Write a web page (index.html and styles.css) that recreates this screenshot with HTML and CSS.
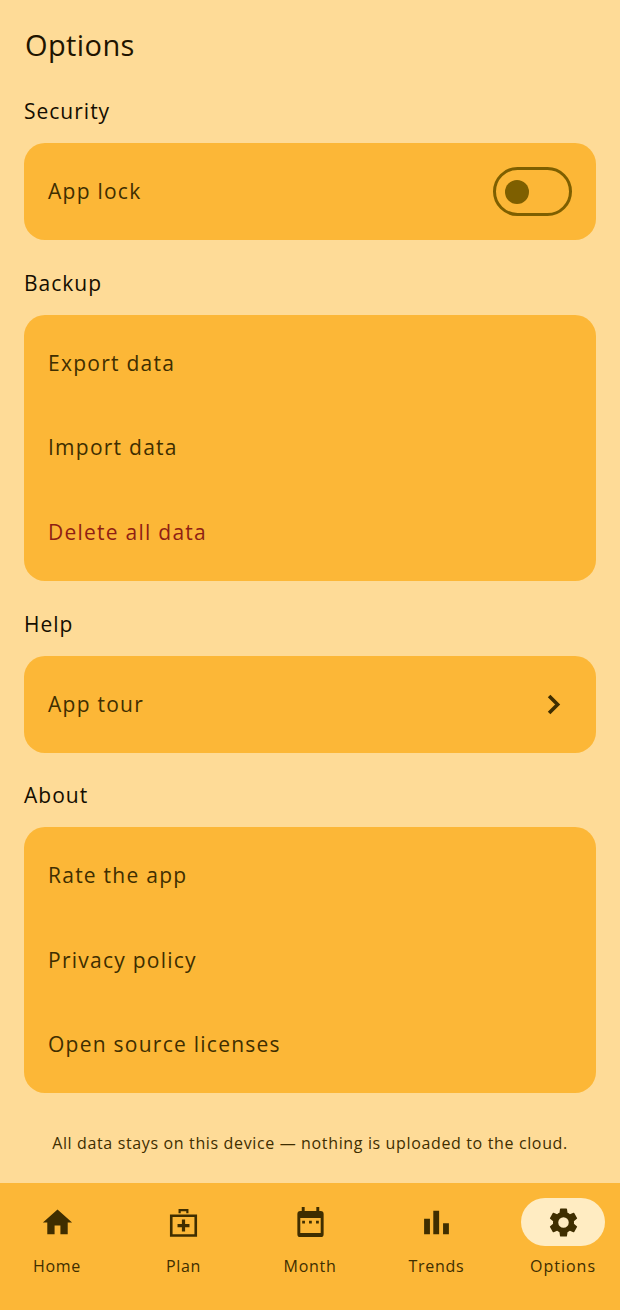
FILE: index.html
```html
<!DOCTYPE html>
<html lang="en">
<head>
  <meta charset="UTF-8">
  <title>Options</title>
  <link rel="stylesheet" href="styles.css">
</head>
<body>

  <main class="page">
    <h1 class="page-title">Options</h1>

    <h2 class="section-title">Security</h2>
    <div class="card">
      <div class="row">
        <span>App lock</span>
        <span class="switch"><span class="switch-thumb"></span></span>
      </div>
    </div>

    <h2 class="section-title">Backup</h2>
    <div class="card">
      <div class="row">Export data</div>
      <div class="row">Import data</div>
      <div class="row danger">Delete all data</div>
    </div>

    <h2 class="section-title">Help</h2>
    <div class="card">
      <div class="row">
        <span>App tour</span>
        <svg class="chevron" viewBox="0 0 24 24"><path d="M8.6 5.4 15.2 12l-6.6 6.6" fill="none" stroke="currentColor" stroke-width="2.8"/></svg>
      </div>
    </div>

    <h2 class="section-title">About</h2>
    <div class="card">
      <div class="row">Rate the app</div>
      <div class="row">Privacy policy</div>
      <div class="row">Open source licenses</div>
    </div>

    <p class="note">All data stays on this device — nothing is uploaded to the cloud.</p>
  </main>

  <nav class="tabbar">
    <div class="tab">
      <span class="tab-icon">
        <svg viewBox="0 0 24 24"><path d="M10 20v-6h4v6h5v-8h3L12 3 2 12h3v8z"/></svg>
      </span>
      <span>Home</span>
    </div>
    <div class="tab">
      <span class="tab-icon">
        <svg viewBox="0 0 24 24"><path d="M8.600 2.700h6.800v3h-1.500V4.300h-3.800v1.400H8.600z"/><path fill-rule="evenodd" d="M2.700 6.500h18.600v15.300H2.700zM4.500 8.200v11.900h15V8.200z"/><path d="M10.900 10h2.200v3h3v2.200h-3v3h-2.200v-3h-3V13h3z"/></svg>
      </span>
      <span>Plan</span>
    </div>
    <div class="tab">
      <span class="tab-icon">
        <svg viewBox="0 0 24 24"><path fill-rule="evenodd" d="M6 1.400h2v2.700h8V1.400h2v2.700h1a2 2 0 0 1 2 2V20a2 2 0 0 1-2 2H5a2 2 0 0 1-2-2V6.100a2 2 0 0 1 2-2h1zM5 8.900v10.300h14V8.900z"/><path d="M6.300 10.800h1.900v1.900H6.300zM11 10.800h1.900v1.900H11zM15.800 10.800h1.900v1.900h-1.900z"/></svg>
      </span>
      <span>Month</span>
    </div>
    <div class="tab">
      <span class="tab-icon">
        <svg viewBox="0 0 24 24"><path d="M3.500 9.500h4V20h-4zM9.800 4h4v16h-4zM16.500 12.500h4V20h-4z"/></svg>
      </span>
      <span>Trends</span>
    </div>
    <div class="tab active">
      <span class="tab-icon">
        <svg viewBox="0 0 24 24"><path d="M19.140 12.940c.04-.3.060-.61.060-.94 0-.32-.02-.64-.07-.94l2.030-1.580a.49.49 0 0 0 .12-.61l-1.920-3.320a.49.49 0 0 0-.59-.22l-2.390.96c-.5-.38-1.030-.7-1.620-.94l-.36-2.540a.48.48 0 0 0-.48-.41h-3.840a.47.47 0 0 0-.47.41l-.36 2.540c-.59.24-1.130.57-1.620.94l-2.390-.96a.48.48 0 0 0-.59.22L2.740 8.870a.47.47 0 0 0 .12.61l2.030 1.580c-.05.3-.09.63-.09.94s.02.64.07.94l-2.030 1.580a.49.49 0 0 0-.12.61l1.920 3.320c.12.22.37.29.59.22l2.390-.96c.5.38 1.030.7 1.620.94l.36 2.540c.05.24.24.41.48.41h3.840c.24 0 .44-.17.47-.41l.36-2.540c.59-.24 1.130-.56 1.620-.94l2.390.96c.22.08.47 0 .59-.22l1.920-3.320a.47.47 0 0 0-.12-.61zM12 15.600a3.600 3.600 0 1 1 0-7.200 3.600 3.600 0 0 1 0 7.200z"/></svg>
      </span>
      <span>Options</span>
    </div>
  </nav>

</body>
</html>
```

FILE: styles.css
```css
body {
  background-color: #fedb97;
  color: #1f1400;
  font-family: "Open Sans", sans-serif;
  margin: 0;
  padding: 0;
  width: 620px;
  height: 1310px;
  display: flex;
  flex-direction: column;
}

.page {
  flex: 1;
  padding: 0 24px;
}

.page-title {
  font-size: 29px;
  font-weight: 400;
  line-height: 38px;
  letter-spacing: 0.4px;
  margin: 0 0 0 1px;
  padding-top: 26px;
  padding-bottom: 33px;
}

.section-title {
  font-size: 21px;
  font-weight: 500;
  line-height: 28px;
  letter-spacing: 1px;
  margin: 0 0 18px;
  color: #140d00;
}

.card {
  background-color: #fcb737;
  border-radius: 21px;
  padding: 6.4px 0;
  margin-bottom: 28.7px;
  color: #3f2e00;
}

.row {
  height: 84.4px;
  box-sizing: border-box;
  padding: 0 24px 1px;
  display: flex;
  align-items: center;
  justify-content: space-between;
  font-size: 21px;
  letter-spacing: 1.25px;
}

.danger {
  color: #8f1f14;
}

.switch {
  width: 79px;
  height: 49px;
  box-sizing: border-box;
  border: 3.4px solid #7e5f00;
  border-radius: 25px;
  display: flex;
  align-items: center;
  padding-left: 9px;
  margin-bottom: -1px;
}

.switch-thumb {
  width: 24px;
  height: 24px;
  border-radius: 50%;
  background-color: #7e5f00;
}

.chevron {
  width: 31px;
  height: 31px;
  margin-right: 3px;
  margin-bottom: -1px;
  color: #3f2e00;
}

.note {
  margin: 0;
  text-align: center;
  font-size: 16px;
  line-height: 22px;
  color: #3f2e00;
  letter-spacing: 0.64px;
  padding-top: 10px;
}

.tabbar {
  height: 127px;
  background-color: #fcb737;
  display: flex;
  justify-content: space-between;
  padding: 0 15px;
  color: #3f2e00;
}

.tab {
  width: 84px;
  display: flex;
  flex-direction: column;
  align-items: center;
  padding-top: 15px;
  font-size: 16px;
  font-weight: 500;
  letter-spacing: 0.7px;
  white-space: nowrap;
}

.tab-icon {
  width: 84px;
  height: 48px;
  border-radius: 24px;
  display: flex;
  align-items: center;
  justify-content: center;
  margin-bottom: 9px;
}

.tab-icon svg {
  width: 35px;
  height: 35px;
  fill: currentColor;
}

.tab.active .tab-icon {
  background-color: #ffecc2;
}

.tab.active {
  font-weight: 400;
  letter-spacing: 1px;
}
```
